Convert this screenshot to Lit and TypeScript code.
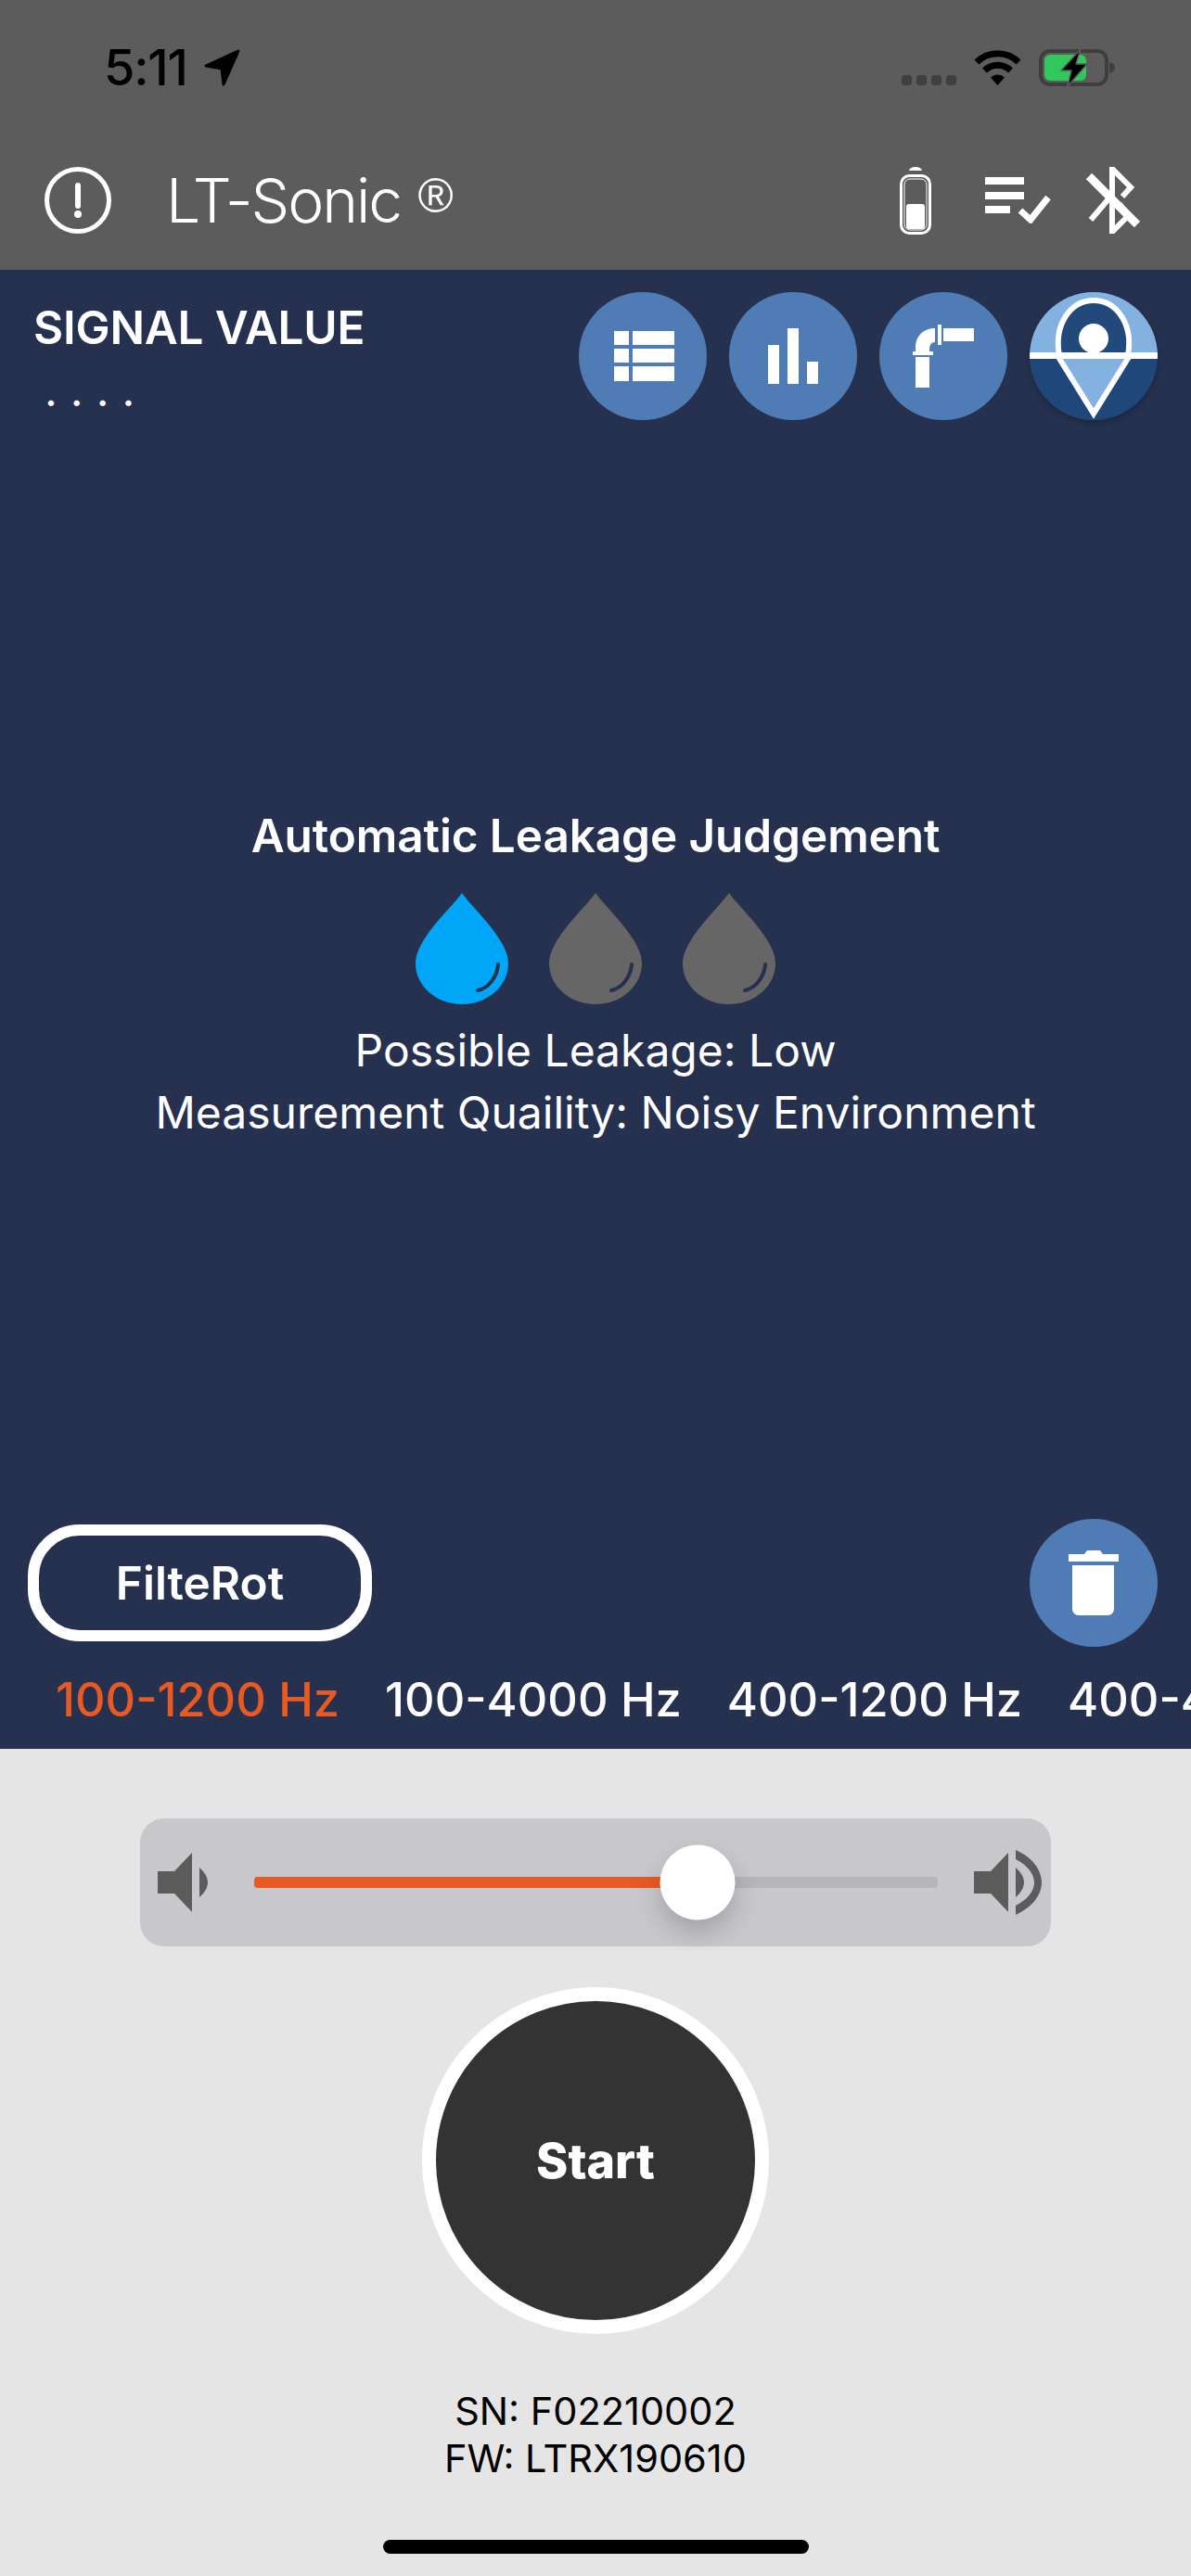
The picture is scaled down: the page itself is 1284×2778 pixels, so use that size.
import { LitElement, html, css } from 'lit';
import { customElement, state } from 'lit/decorators.js';
import { classMap } from 'lit/directives/class-map.js';

const FILTERS = ['100-1200 Hz', '100-4000 Hz', '400-1200 Hz', '400-4000 Hz'];

@customElement('app-root')
export class AppRoot extends LitElement {
  static styles = css`
    :host {
      display: flex;
      flex-direction: column;
      width: 1284px;
      height: 2778px;
      overflow: hidden;
      font-family: Inter, 'Liberation Sans', sans-serif;
      color: #fff;
      background: #e5e5e5;
    }
    svg {
      display: block;
      flex: none;
    }

    /* status bar */
    .status {
      display: flex;
      align-items: center;
      height: 146px;
      padding: 0 82px 0 112px;
      background: #5c5c5c;
      color: #000;
      box-sizing: border-box;
    }
    .time {
      width: 108px;
      font-size: 54px;
      font-weight: 500;
      letter-spacing: -1.2px;
      line-height: 1;
    }
    .status-right {
      display: flex;
      align-items: center;
      gap: 19px;
      margin-left: auto;
    }
    .dots {
      display: flex;
      gap: 5px;
      align-self: flex-end;
      margin-bottom: 1px;
    }
    .dots span {
      width: 11px;
      height: 11px;
      border-radius: 3px;
      background: #404040;
    }

    /* app header */
    .header {
      display: flex;
      align-items: center;
      height: 145px;
      padding: 0 55px 5px 48px;
      background: #5c5c5c;
      box-sizing: border-box;
    }
    .title {
      margin-left: 59px;
      font-size: 66px;
      font-weight: 300;
      letter-spacing: -2.1px;
      line-height: 1;
    }
    .title sup {
      margin-left: 2px;
      font-family: 'Liberation Sans', sans-serif;
      font-size: 52px;
      letter-spacing: 0;
      line-height: 0;
      vertical-align: 11px;
    }
    .header-icons {
      display: flex;
      align-items: center;
      margin-left: auto;
    }
    .header-icons svg:nth-child(2) {
      margin-left: 58px;
    }
    .header-icons svg:nth-child(3) {
      margin-left: 37px;
    }

    /* measurement panel */
    .panel {
      display: flex;
      flex-direction: column;
      height: 1595px;
      background: #25314f;
    }
    .top {
      display: flex;
      justify-content: space-between;
      padding: 24px 36px 0 36px;
    }
    .signal-label {
      margin-top: 9px;
      font-size: 49.5px;
      font-weight: 600;
      letter-spacing: -0.2px;
      line-height: 58px;
    }
    .signal-value {
      margin: 15px 0 0 12px;
      font-size: 48px;
      letter-spacing: 14px;
      line-height: 48px;
    }
    .actions {
      display: flex;
      gap: 24px;
    }
    .round {
      width: 138px;
      height: 138px;
      border-radius: 50%;
      background: #507cb5;
      flex: none;
    }
    .pin {
      box-shadow: 0 3px 6px rgba(0, 0, 0, 0.25);
      background: none;
    }
    .judgement {
      display: flex;
      flex-direction: column;
      align-items: center;
      margin-top: 419px;
    }
    .judgement h1 {
      margin: 0;
      font-size: 49.5px;
      font-weight: 600;
      letter-spacing: -0.1px;
      line-height: 58px;
    }
    .drops {
      display: flex;
      gap: 44px;
      margin: 33px 0 16px;
    }
    .judgement p {
      margin: 0;
      font-size: 48px;
      font-weight: 400;
      line-height: 67px;
    }
    .controls {
      display: flex;
      justify-content: space-between;
      align-items: center;
      margin-top: auto;
      padding: 0 36px 0 30px;
    }
    .filter-btn {
      display: flex;
      align-items: center;
      justify-content: center;
      width: 371px;
      height: 126px;
      border: 12px solid #fff;
      border-radius: 56px;
      box-sizing: border-box;
      font-size: 49.5px;
      font-weight: 600;
    }
    .tabs {
      display: flex;
      gap: 49px;
      height: 110px;
      padding: 27px 0 0 60px;
      box-sizing: border-box;
      white-space: nowrap;
      overflow: hidden;
      font-size: 50.5px;
      font-weight: 500;
      line-height: 60px;
    }
    .tab {
      flex: none;
    }
    .tab.active {
      color: #e85a24;
    }

    /* lower part */
    .bottom {
      flex: 1;
      display: flex;
      flex-direction: column;
      align-items: center;
      position: relative;
      background: #e5e5e5;
      color: #000;
    }
    .volume {
      display: flex;
      align-items: center;
      width: 982px;
      height: 138px;
      margin-top: 75px;
      padding: 0 10px 0 19px;
      border-radius: 26px;
      background: #c7c7cc;
      box-sizing: border-box;
    }
    .track {
      position: relative;
      flex: 1;
      height: 12px;
      margin: 0 39px 0 48px;
      border-radius: 4px;
      background: #b5b5ba;
    }
    .track-fill {
      height: 100%;
      border-radius: 4px 0 0 4px;
      background: #e85a24;
    }
    .thumb {
      position: absolute;
      top: 50%;
      width: 81px;
      height: 81px;
      border-radius: 50%;
      background: #fff;
      transform: translate(-50%, -50%);
      box-shadow: 0 14px 28px rgba(0, 0, 0, 0.18);
    }
    .start {
      display: flex;
      align-items: center;
      justify-content: center;
      width: 374px;
      height: 374px;
      margin-top: 44px;
      border: 15px solid #fff;
      border-radius: 50%;
      background: #333;
      box-sizing: border-box;
      color: #fff;
      font-size: 52px;
      font-weight: 800;
    }
    .device {
      margin-top: 58px;
      font-size: 41.5px;
      line-height: 51px;
      text-align: center;
    }
    .home-bar {
      position: absolute;
      bottom: 24px;
      left: 413px;
      width: 459px;
      height: 15px;
      border-radius: 8px;
      background: #000;
    }
  `;

  @state() private activeFilter = 0;
  @state() private volume = 0.648;

  private renderStatus() {
    return html`
      <div class="status">
        <span class="time">5:11</span>
        <svg width="40" height="40" viewBox="0 0 40 40">
          <path d="M37 2 2 18l17 3 2 17z" fill="#000" stroke="#000" stroke-width="3" stroke-linejoin="round" />
        </svg>
        <div class="status-right">
          <div class="dots"><span></span><span></span><span></span><span></span></div>
          <svg width="51" height="38" viewBox="0 0 51 38" fill="none" stroke="#000" stroke-width="7">
            <path d="M3 13a32 32 0 0 1 45 0" />
            <path d="M11.500 22a20 20 0 0 1 28 0" />
            <path d="M18 29.500a11 11 0 0 1 15 0L25.500 38z" fill="#000" stroke="none" />
          </svg>
          <svg width="82" height="40" viewBox="0 0 82 40">
            <rect x="2" y="2" width="71" height="36" rx="10" fill="none" stroke="#3e3e3e" stroke-width="4" />
            <rect x="6" y="6" width="45" height="28" rx="6" fill="#30c85a" />
            <path d="M76 14c4 1 6 3 6 6s-2 5-6 6z" fill="#3e3e3e" />
            <path d="M45 0 24 23h11l-4 17 21-24H40z" fill="#000" stroke="#5c5c5c" stroke-width="1.500" stroke-linejoin="round" />
          </svg>
        </div>
      </div>
    `;
  }

  private renderHeader() {
    return html`
      <div class="header">
        <svg width="72" height="72" viewBox="0 0 72 72">
          <circle cx="36" cy="36" r="33.500" fill="none" stroke="#fff" stroke-width="5" />
          <path d="M36 20v22" stroke="#fff" stroke-width="6" stroke-linecap="round" />
          <circle cx="36" cy="51" r="4" fill="#fff" />
        </svg>
        <div class="title">LT-Sonic <sup>®</sup></div>
        <div class="header-icons">
          <svg width="34" height="73" viewBox="0 0 34 73">
            <path d="M10 4a7 4 0 0 1 14 0z" fill="#fff" />
            <rect x="1.500" y="9.500" width="31" height="62" rx="9" fill="none" stroke="#fff" stroke-width="3" />
            <rect x="5" y="13" width="24" height="55" rx="6" fill="none" stroke="#fff" stroke-width="1" />
            <rect x="7" y="40" width="20" height="27" rx="3" fill="#fff" />
          </svg>
          <svg width="72" height="50" viewBox="0 0 72 50">
            <path d="M0 0h42v8H0zM0 16h42v8H0zM0 31h27v8H0z" fill="#fff" />
            <path d="M38 36l11 10 19-24" fill="none" stroke="#fff" stroke-width="7" />
          </svg>
          <svg width="58" height="72" viewBox="0 0 58 72" fill="none" stroke="#fff" stroke-width="7">
            <path d="M3 10l52 52" stroke-width="9" />
            <path d="M5 57l23-27M28 0v72" stroke-width="6" />
            <path d="M28 2l20 20-9 10" stroke-width="6" />
            <path d="M28 70l17-17-9-13" stroke-width="6" />
          </svg>
        </div>
      </div>
    `;
  }

  private renderActions() {
    return html`
      <div class="actions">
        <div class="round">
          <svg width="138" height="138" viewBox="0 0 138 138">
            <path d="M38 42h16v15H38zM58 42h45v15H58zM38 61h16v15H38zM58 61h45v15H58zM38 80h16v16H38zM58 80h45v16H58z" fill="#fff" />
          </svg>
        </div>
        <div class="round">
          <svg width="138" height="138" viewBox="0 0 138 138">
            <path d="M42 57h12v42H42zM63 39h12v60H63zM84 75h12v24H84z" fill="#fff" />
          </svg>
        </div>
        <div class="round">
          <svg width="138" height="138" viewBox="0 0 138 138">
            <path
              d="M69 39h33v14H69zM63 35h4v22h-4zM60 39v15c-4 0-6 3-6 8v2H39v-4c0-13 9-21 21-21zM36 64h22v4H36zM39 70h15v33H39z"
              fill="#fff"
            />
          </svg>
        </div>
        <div class="round pin">
          <svg width="138" height="138" viewBox="0 0 138 138">
            <defs>
              <clipPath id="pin-clip"><circle cx="69" cy="69" r="69" /></clipPath>
            </defs>
            <g clip-path="url(#pin-clip)">
              <rect width="138" height="68" fill="#84b2e0" />
              <rect y="68" width="138" height="70" fill="#1f4779" />
              <path d="M32 68C26 35 44 9 69 9s43 26 37 59z" fill="#22497b" stroke="#fff" stroke-width="6" />
              <path d="M31 70l38 60 38-60z" fill="#84b2e0" />
              <path d="M31 70l38 61 38-61" fill="none" stroke="#fff" stroke-width="6" />
              <ellipse cx="69" cy="50" rx="16" ry="16" fill="#fff" />
              <rect y="65" width="138" height="7" fill="#fff" />
            </g>
          </svg>
        </div>
      </div>
    `;
  }

  private renderDrop(color: string) {
    return html`
      <svg width="100" height="120" viewBox="0 0 100 120">
        <path
          d="M50 0C62 17 100 50 100 76c0 24-22 44-50 44S0 100 0 76C0 50 38 17 50 0z"
          fill=${color}
        />
        <path d="M89 77c-1 13-10 26-22 28" fill="none" stroke="#25314f" stroke-width="4" stroke-linecap="round" />
      </svg>
    `;
  }

  private renderVolume() {
    return html`
      <div class="volume">
        <svg width="56" height="64" viewBox="0 0 56 64">
          <path d="M0 20h18L37 0v64L18 44H0zM45 16q18 16 0 32z" fill="#5c5c5c" />
        </svg>
        <div class="track">
          <div class="track-fill" style="width: ${this.volume * 100}%"></div>
          <div class="thumb" style="left: ${this.volume * 100}%"></div>
        </div>
        <svg width="73" height="70" viewBox="0 0 73 70">
          <path d="M0 23h18L37 3v64L18 47H0zM45 19q18 16 0 32z" fill="#5c5c5c" />
          <path
            d="M45 0c22 10 28 25 28 35s-6 25-28 35V60c14-7 20-17 20-25S59 17 45 10z"
            fill="#5c5c5c"
          />
        </svg>
      </div>
    `;
  }

  render() {
    return html`
      ${this.renderStatus()} ${this.renderHeader()}
      <div class="panel">
        <div class="top">
          <div>
            <div class="signal-label">SIGNAL VALUE</div>
            <div class="signal-value">....</div>
          </div>
          ${this.renderActions()}
        </div>
        <div class="judgement">
          <h1>Automatic Leakage Judgement</h1>
          <div class="drops">
            ${this.renderDrop('#00a6f8')} ${this.renderDrop('#666666')} ${this.renderDrop('#666666')}
          </div>
          <p>Possible Leakage: Low</p>
          <p>Measurement Quaility: Noisy Environment</p>
        </div>
        <div class="controls">
          <div class="filter-btn">FilteRot</div>
          <div class="round">
            <svg width="138" height="138" viewBox="0 0 138 138">
              <path
                d="M59 38l3-4h14l3 4h17v8H42v-8zM46 50h45v47c0 4-3 7-7 7H53c-4 0-7-3-7-7z"
                fill="#fff"
              />
            </svg>
          </div>
        </div>
        <div class="tabs">
          ${FILTERS.map(
            (f, i) => html`<span class=${classMap({ tab: true, active: i === this.activeFilter })}>${f}</span>`
          )}
        </div>
      </div>
      <div class="bottom">
        ${this.renderVolume()}
        <div class="start">Start</div>
        <div class="device">SN: F02210002<br />FW: LTRX190610</div>
        <div class="home-bar"></div>
      </div>
    `;
  }
}

declare global {
  interface HTMLElementTagNameMap {
    'app-root': AppRoot;
  }
}
